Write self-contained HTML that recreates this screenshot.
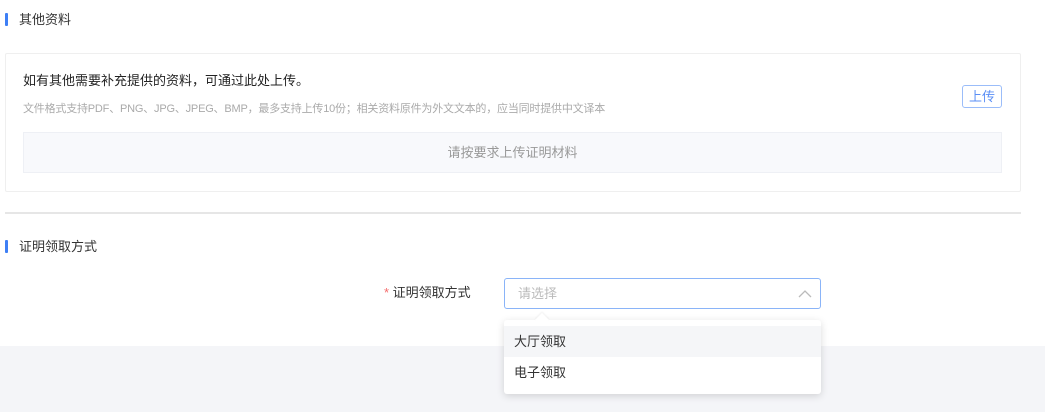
<!DOCTYPE html>
<html><head><meta charset="utf-8"><style>
*{margin:0;padding:0;box-sizing:border-box}
body{width:1045px;height:412px;position:relative;background:#fff;font-family:"Liberation Sans","Noto Sans CJK SC",sans-serif;color:#333;overflow:hidden}
.a{position:absolute}
.bar{width:3px;height:13px;background:#3e7ff5;border-radius:1px}
</style></head><body>
<div class="a" style="left:0;top:346px;width:1045px;height:66px;background:#f4f5f8"></div>
<div class="a bar" style="left:5px;top:13px"></div>
<div class="a" style="left:19px;top:11px;font-size:13px;line-height:17px">其他资料</div>
<div class="a" style="left:5px;top:53px;width:1016px;height:139px;border:1px solid #efefef;border-radius:2px"></div>
<div class="a" style="left:23px;top:72px;font-size:13px;line-height:18px;color:#222">如有其他需要补充提供的资料，可通过此处上传。</div>
<div class="a" style="left:23px;top:101px;font-size:11px;line-height:16px;color:#aaa;letter-spacing:-0.2px">文件格式支持PDF、PNG、JPG、JPEG、BMP，最多支持上传10份；相关资料原件为外文文本的，应当同时提供中文译本</div>
<div class="a" style="left:962px;top:85px;width:40px;height:23px;border:1px solid #9bbdf9;border-radius:3px;color:#5b8ff5;font-size:13px;line-height:21px;text-align:center">上传</div>
<div class="a" style="left:23px;top:132px;width:979px;height:41px;background:#f8f9fc;border:1px solid #eef0f5;font-size:13px;line-height:39px;text-align:center;color:#999">请按要求上传证明材料</div>
<div class="a" style="left:5px;top:212px;width:1016px;height:2px;background:#e6e6e6"></div>
<div class="a bar" style="left:5px;top:240px"></div>
<div class="a" style="left:19px;top:238px;font-size:13px;line-height:17px">证明领取方式</div>
<div class="a" style="left:384px;top:284px;font-size:13px;line-height:17px"><span style="color:#f56c6c">*</span> 证明领取方式</div>
<div class="a" style="left:504px;top:278px;width:317px;height:31px;border:1px solid #8ab4f8;border-radius:3px;background:#fff;font-size:13px;line-height:29px;padding-left:13px;color:#bbb">请选择</div>
<svg class="a" style="left:797px;top:288px" width="16" height="12"><path d="M2 9 L8 3 L14 9" fill="none" stroke="#bbb" stroke-width="1.3"/></svg>
<div class="a" style="left:504px;top:320px;width:317px;height:74px;background:#fff;border-radius:3px;box-shadow:0 2px 8px rgba(0,0,0,.15)"></div>
<div class="a" style="left:537px;top:315px;width:10px;height:10px;background:#fff;transform:rotate(45deg);box-shadow:-1px -1px 2px rgba(0,0,0,.06)"></div>
<div class="a" style="left:504px;top:326px;width:317px;height:31px;background:#f5f6f8;font-size:13px;line-height:31px;padding-left:10px;color:#333">大厅领取</div>
<div class="a" style="left:504px;top:357px;width:317px;height:31px;font-size:13px;line-height:31px;padding-left:10px;color:#333">电子领取</div>
</body></html>
